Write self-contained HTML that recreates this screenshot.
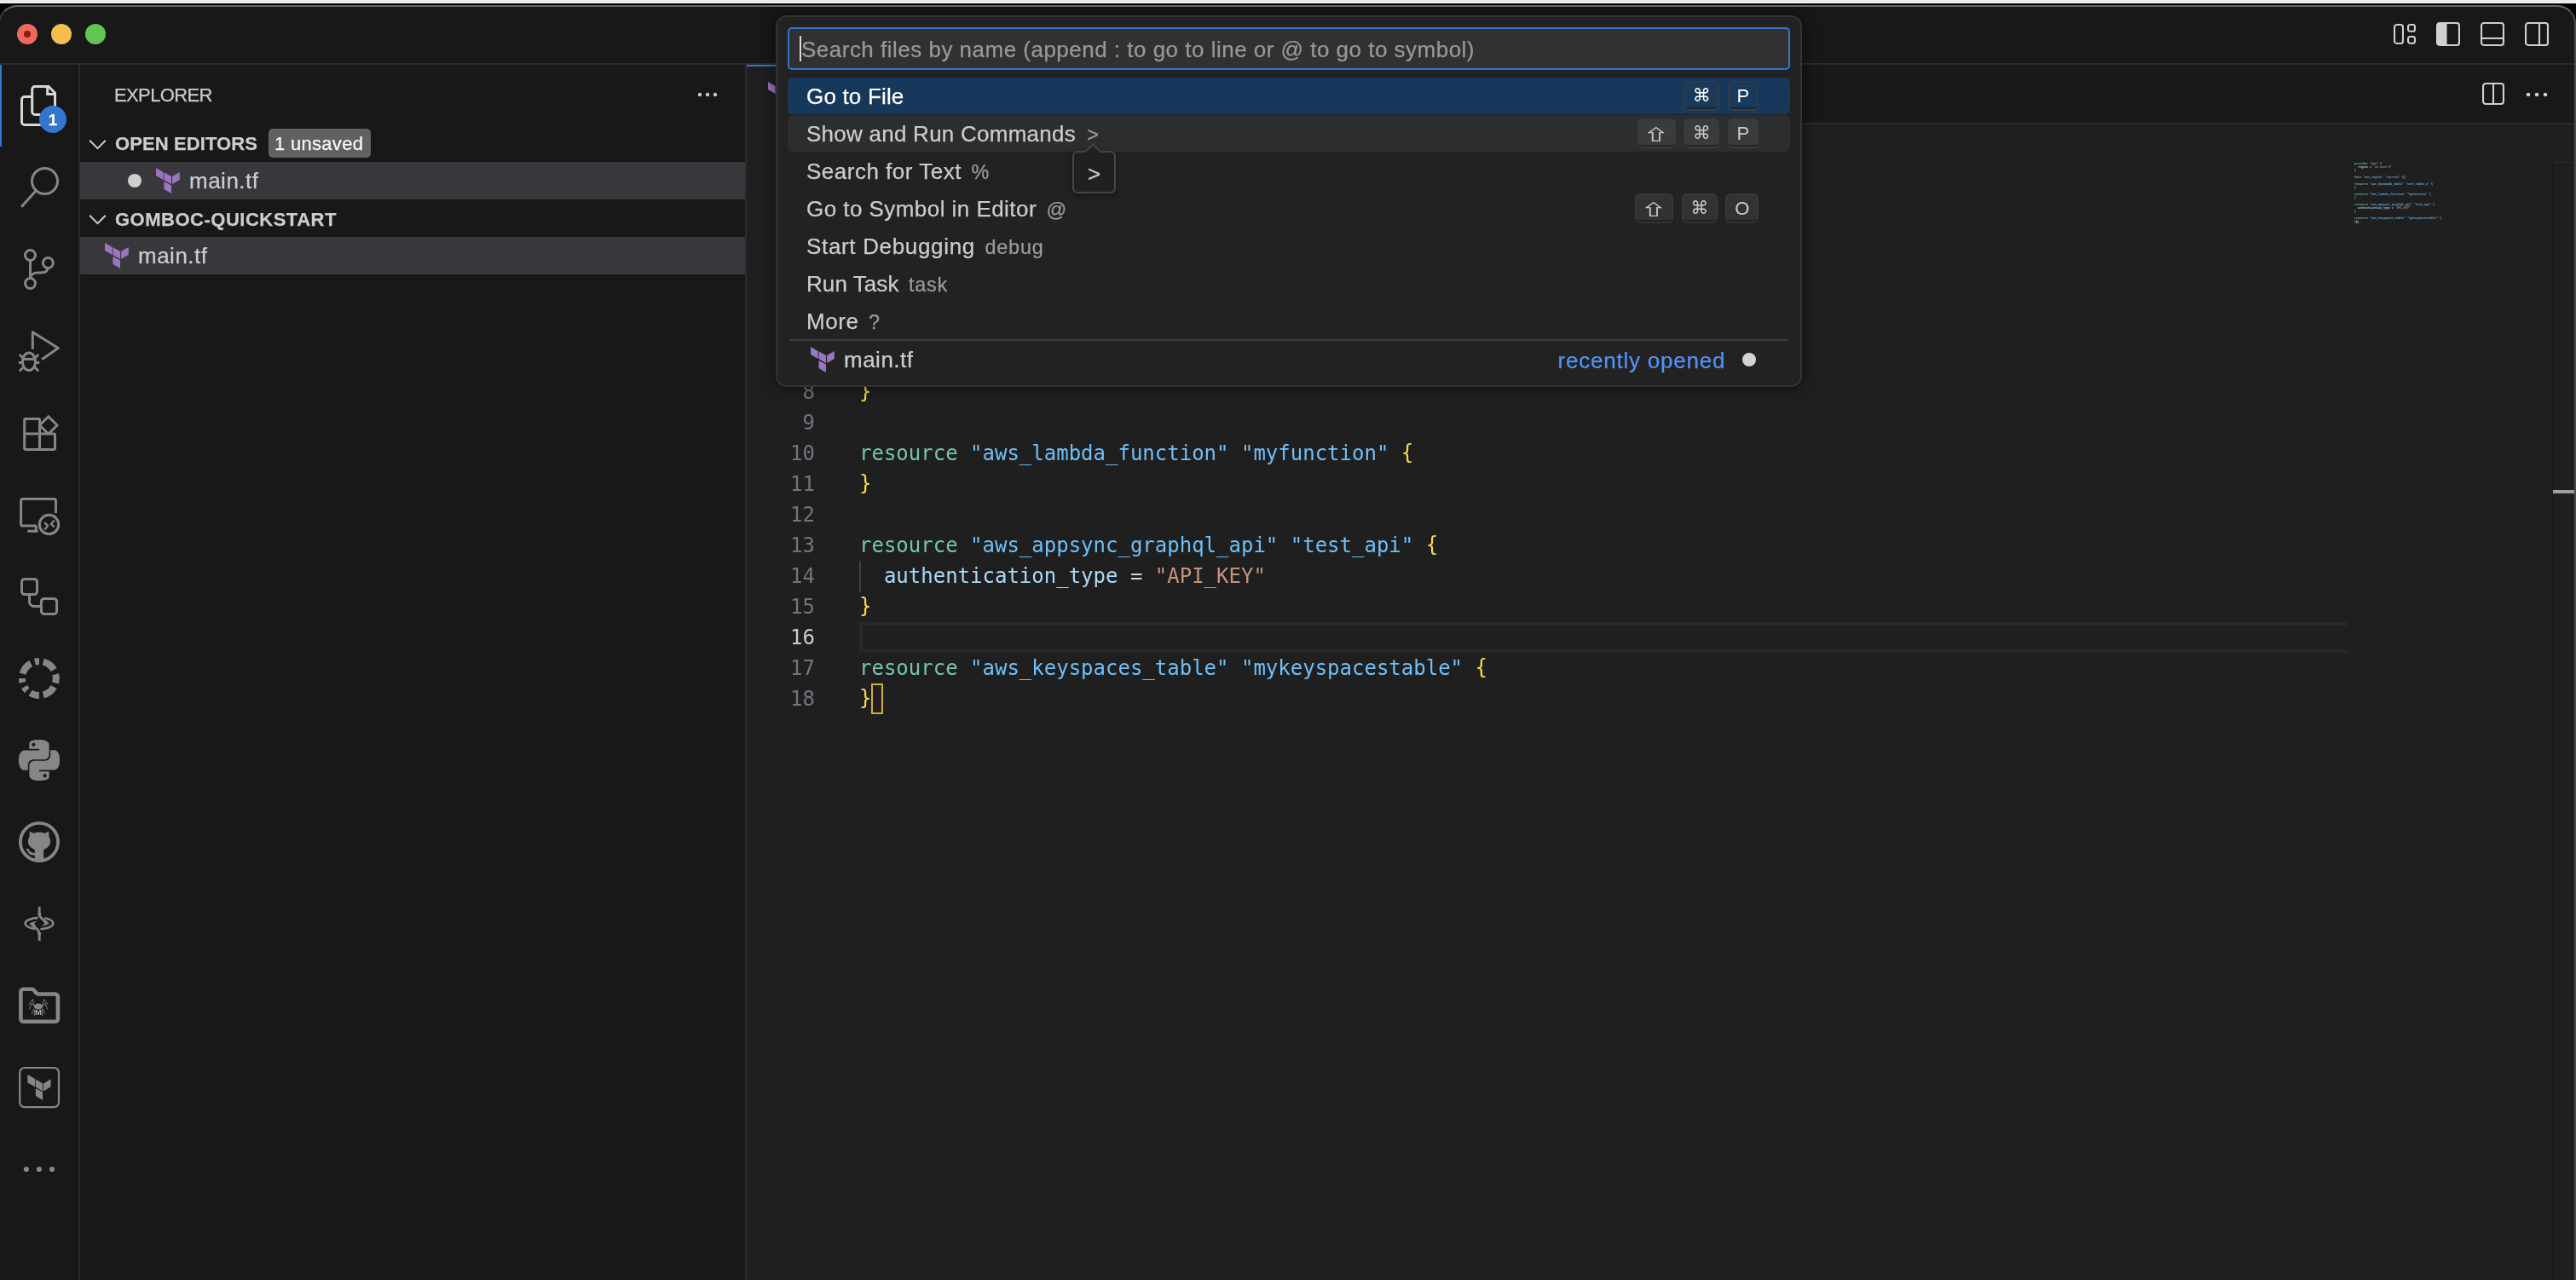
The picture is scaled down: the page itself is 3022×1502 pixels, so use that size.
<!DOCTYPE html>
<html lang="en"><head><meta charset="utf-8"><title>main.tf — gomboc-quickstart</title>
<style>
*{box-sizing:border-box;margin:0;padding:0}
html,body{width:3022px;height:1502px;overflow:hidden;background:#000}
body{position:relative;font-family:"Liberation Sans","DejaVu Sans",sans-serif;color:#cccccc;-webkit-font-smoothing:antialiased}
.abs{position:absolute}
.t{position:absolute;white-space:pre;line-height:1;-webkit-text-stroke:0.25px currentColor}
#strip{left:0;top:0;width:3022px;height:4px;background:#eceae4;border-bottom:1px solid #fdfbf6}
#win{left:-2px;top:6px;width:3024px;height:1600px;background:#181818;border-radius:22px 22px 0 0;overflow:hidden}
#winhl{left:-2px;top:6px;width:3024px;height:1600px;border-radius:22px 22px 0 0;border:2px solid #676767;border-bottom:none;border-left-color:#3a3a3a;border-right-color:#4a4a4a;pointer-events:none}
.mono{font-family:"DejaVu Sans Mono","Liberation Mono",monospace}
.code{position:absolute;left:1008px;font-size:24px;line-height:36px;height:36px;white-space:pre;font-family:"DejaVu Sans Mono","Liberation Mono",monospace}
.ln{position:absolute;left:876px;width:80px;text-align:right;font-size:24px;line-height:36px;height:36px;color:#6f7680;font-family:"DejaVu Sans Mono","Liberation Mono",monospace}
.mb{color:#c4c4c4}.k{color:#71c6b1}.l{color:#6fbff9}.b{color:#f9d849;position:relative;top:-1.3px}.v{color:#aadafa}.s{color:#c5947c}.o{color:#d4d4d4}
.row{position:absolute;left:924px;width:1176px;height:44px;border-radius:6px}
.rt{position:absolute;left:23px;top:0;height:44px;line-height:44px;font-size:26px;white-space:pre;color:#cccccc}
.rd{font-size:23.4px;color:#9a9a9a}
.key{position:absolute;height:33px;border-radius:6px;background:rgba(128,128,128,.17);border:2px solid rgba(60,60,60,.75);border-bottom-color:rgba(30,30,30,.8);box-shadow:0 2px 0 rgba(70,70,70,.5);font-size:22px;line-height:31px;text-align:center;color:#cccccc;font-family:"Liberation Sans","DejaVu Sans",sans-serif}
</style></head>
<body>
<div class="abs" id="strip"></div>
<div class="abs" id="win">
<div class="abs" id="w" style="left:2px;top:-6px;width:3022px;height:1600px;will-change:transform">
<div class="abs" style="left:-2px;top:74px;width:3026px;height:2px;background:#2b2b2b"></div>
<div class="abs" style="left:20px;top:28px;width:24px;height:24px;border-radius:50%;background:#ed6a5e"></div>
<div class="abs" style="left:60px;top:28px;width:24px;height:24px;border-radius:50%;background:#f4bf4f"></div>
<div class="abs" style="left:100px;top:28px;width:24px;height:24px;border-radius:50%;background:#61c554"></div>
<div class="abs" style="left:28px;top:36px;width:8px;height:8px;border-radius:50%;background:#8e1a10"></div>
<div class="abs" style="left:92px;top:76px;width:2px;height:1500px;background:#2b2b2b"></div>
<div class="abs" style="left:874px;top:76px;width:2px;height:1500px;background:#2b2b2b"></div>
<div class="abs" style="left:-2px;top:76px;width:4px;height:96px;background:#3376cd"></div>
<div class="abs" style="left:876px;top:146px;width:2146px;height:1500px;background:#1f1f1f"></div>
<div class="abs" style="left:876px;top:144px;width:2146px;height:2px;background:#2b2b2b"></div>
<div class="abs" style="left:876px;top:76px;width:260px;height:70px;background:#1f1f1f;border-top:2px solid #3376cd;border-right:2px solid #2b2b2b"></div>
<svg class="abs" style="left:901px;top:95.5px;" width="28.0" height="30.0" viewBox="0 0 28 30"><polygon fill="#9976bf" points="0,0 8.6,4.9 8.6,13.9 0,9"/><polygon fill="#9976bf" points="9.5,5.2 18,10.1 18,19.1 9.5,14.2"/><polygon fill="#9976bf" points="19.1,10.1 27.8,5.1 27.8,13.9 19.1,19.1"/><polygon fill="#9976bf" points="9.5,16.1 18,20.6 18,30 9.5,25.1"/></svg>
<div class="t" style="left:941px;top:98px;font-size:26px;color:#fff">main.tf</div>
<svg class="abs" style="left:0;top:76px" width="96" height="96" viewBox="0 0 96 96" fill="none" stroke="#d7d7d7" stroke-width="3"><path d="M41 25.5H57L64.5 33V58.5H41a3.3 3.3 0 0 1-3.3-3.3V28.8A3.3 3.3 0 0 1 41 25.5z"/><path d="M55.7 25.5V34.5H64.5"/><path d="M37.7 37.5H29a3.5 3.5 0 0 0-3.5 3.5V67a3.5 3.5 0 0 0 3.5 3.5H52V58.5"/></svg>
<div class="abs" style="left:46px;top:124px;width:32px;height:32px;border-radius:50%;background:#3376cd"></div>
<div class="t" style="left:46px;top:131px;width:32px;text-align:center;font-size:19px;font-weight:bold;color:#fff">1</div>
<svg class="abs" style="left:0;top:172px" width="96" height="96" viewBox="0 0 96 96" fill="none" stroke="#868686" stroke-width="3"><circle cx="52.5" cy="40.5" r="15"/><path d="M42.2 51.8L25.2 70.8"/></svg>
<svg class="abs" style="left:0;top:268px" width="96" height="96" viewBox="0 0 96 96" fill="none" stroke="#868686" stroke-width="3"><circle cx="35.5" cy="31.5" r="6"/><circle cx="56.4" cy="40.5" r="6"/><circle cx="35.5" cy="64.5" r="6"/><path d="M35.5 37.5V58.5"/><path d="M56 46.5C55 53 49 52 44.5 52C39.5 52 36 54.5 35.6 58.5"/></svg>
<svg class="abs" style="left:0;top:364px" width="96" height="96" viewBox="0 0 96 96" fill="none" stroke="#868686" stroke-width="3"><path d="M38.3 45.8V25.800L68.300 44.500L49.1 57.8" stroke-linejoin="round"/><ellipse cx="34" cy="60.3" rx="7.6" ry="10.3"/><path d="M26.6 57.4H41.4"/><path d="M28.6 54.5A5.6 5.6 0 0 1 39.4 54.5" stroke-width="2.2"/><path d="M22.8 52L27 56M45.2 52L41 56M21.8 61.5H26.4M41.6 61.5H46.2M22.8 71.5L27.6 66.7M45.2 71.5L40.4 66.7"/></svg>
<svg class="abs" style="left:0;top:460px" width="96" height="96" viewBox="0 0 96 96" fill="none" stroke="#868686" stroke-width="3"><path d="M30 31.5H45.2a1.3 1.3 0 0 1 1.3 1.3V67.4H30a1.3 1.3 0 0 1-1.3-1.3V32.8A1.3 1.3 0 0 1 30 31.5z"/><path d="M28.7 49.1H63.2a1.3 1.3 0 0 1 1.3 1.3V66.1a1.3 1.3 0 0 1-1.3 1.3H46.5"/><path d="M56.8 28.7L67.1 39L56.8 49.3L46.5 39z" stroke-linejoin="round"/></svg>
<svg class="abs" style="left:0;top:556px" width="96" height="96" viewBox="0 0 96 96" fill="none" stroke="#868686" stroke-width="3"><path d="M65.5 46V32a2.4 2.4 0 0 0-2.4-2.4H27a2.4 2.4 0 0 0-2.4 2.4V58.7a2.4 2.4 0 0 0 2.4 2.4H42.6"/><path d="M42.3 61V67.3M32.4 67.3H44.6"/><circle cx="57.5" cy="59.5" r="11.2"/><path d="M52.3 57.2L56 61L52.3 65.5M63.8 54.6L60 58.8L63.8 62.3" stroke-width="2.4"/></svg>
<svg class="abs" style="left:0;top:652px" width="96" height="96" viewBox="0 0 96 96" fill="none" stroke="#868686" stroke-width="3"><rect x="25.5" y="27.4" width="18" height="18.2" rx="3.5"/><rect x="48.4" y="50.4" width="18.2" height="18.2" rx="3.5"/><path d="M34.5 46V54a5.5 5.5 0 0 0 5.5 5.5H48"/></svg>
<svg class="abs" style="left:0;top:748px" width="96" height="96" viewBox="0 0 96 96" fill="none" stroke="#868686" stroke-width="8"><path d="M40.89 28.64A20 20 0 0 1 45.90 28.00M50.74 28.59A20 20 0 0 1 63.22 38.00M65.31 43.16A20 20 0 0 1 65.13 53.51M63.22 58.00A20 20 0 0 1 50.74 67.41M45.90 68.00A20 20 0 0 1 35.60 65.14M31.76 62.14A20 20 0 0 1 28.58 58.00M26.49 52.84A20 20 0 0 1 25.90 48.00M26.63 42.66A20 20 0 0 1 36.20 30.51"/></svg>
<svg class="abs" style="left:0;top:844px" width="96" height="96" viewBox="0 0 96 96"><g transform="translate(22 24) scale(2.0)"><path fill="#868686" fill-rule="evenodd" d="M14.25.18l.9.2.73.26.59.3.45.32.34.34.25.34.16.33.1.3.04.26.02.2-.01.13V8.5l-.05.63-.13.55-.21.46-.26.38-.3.31-.33.25-.35.19-.35.14-.33.1-.3.07-.26.04-.21.02H8.77l-.69.05-.59.14-.5.22-.41.27-.33.32-.27.35-.2.36-.15.37-.1.35-.07.32-.04.27-.02.21v3.06H3.17l-.21-.03-.28-.07-.32-.12-.35-.18-.36-.26-.36-.36-.35-.46-.32-.59-.28-.73-.21-.88-.14-1.05-.05-1.23.06-1.22.16-1.04.24-.87.32-.71.36-.57.4-.44.42-.33.42-.24.4-.16.36-.1.32-.05.24-.01h.16l.06.01h8.16v-.83H6.18l-.01-2.75-.02-.37.05-.34.11-.31.17-.28.25-.26.31-.23.38-.2.44-.18.51-.15.58-.12.64-.1.71-.06.77-.04.84-.02 1.27.05zm-6.3 1.98l-.23.33-.08.41.08.41.23.34.33.22.41.09.41-.09.33-.22.23-.34.08-.41-.08-.41-.23-.33-.33-.22-.41-.09-.41.09zm13.09 3.95l.28.06.32.12.35.18.36.27.36.35.35.47.32.59.28.73.21.88.14 1.04.05 1.23-.06 1.23-.16 1.04-.24.86-.32.71-.36.57-.4.45-.42.33-.42.24-.4.16-.36.09-.32.05-.24.02-.16-.01h-8.22v.82h5.84l.01 2.76.02.36-.05.34-.11.31-.17.29-.25.25-.31.24-.38.2-.44.17-.51.15-.58.13-.64.09-.71.07-.77.04-.84.01-1.27-.04-1.07-.14-.9-.2-.73-.25-.59-.3-.45-.33-.34-.34-.25-.34-.16-.33-.1-.3-.04-.25-.02-.2.01-.13v-5.34l.05-.64.13-.54.21-.46.26-.38.3-.32.33-.24.35-.2.35-.14.33-.1.3-.06.26-.04.21-.02.13-.01h5.84l.69-.05.59-.14.5-.21.41-.28.33-.32.27-.35.2-.36.15-.36.1-.35.07-.32.04-.28.02-.21V6.07h2.09l.14.01zm-6.47 14.25l-.23.33-.08.41.08.41.23.33.33.23.41.08.41-.08.33-.23.23-.33.08-.41-.08-.41-.23-.33-.33-.23-.41-.08-.41.08z"/></g></svg>
<svg class="abs" style="left:0;top:940px" width="96" height="96" viewBox="0 0 96 96" fill="none" stroke="#868686" stroke-width="3"><circle cx="46" cy="48" r="22.1" stroke-width="3.8"/><g fill="#868686" stroke="none"><ellipse cx="46" cy="47.2" rx="13.1" ry="10.6"/><path d="M34.6 44V36.2q0-.9.8-.5L42.5 39.2zM57.4 44V36.2q0-.9-.8-.5L49.5 39.2z"/><path d="M40.8 55H51.2V68.2q-5.2 1.2-10.4 0z"/><path d="M30.8 56.2c1.2-.8 2.6-.3 3.6 1.2 1.6 2.6 3 3.6 6.6 3.4v2.6c-4.4.6-6.8-.8-8.4-4.2-.5-1-1-1.8-1.8-2.2z"/></g></svg>
<svg class="abs" style="left:0;top:1036px" width="96" height="96" viewBox="0 0 96 96" fill="none" stroke="#868686" stroke-width="3"><path d="M44.6 40.9C36 41.5 29.6 44.3 29.6 47.6c0 3 5 5.500 11.6 6.500M47.400 54.300C56 53.7 62.400 51 62.400 47.600c0-2.900-4.200-5.300-10.200-6.400" stroke-width="2.600"/><path d="M46.200 28V36.500c0 5.500 5.300 6.300 9.800 11.100M46.200 68V59.500c0-5.500-5.300-6.300-10.200-11.900" stroke-width="2.800"/><path fill="#868686" stroke="none" d="M34.2 47.600L43 44.400L40.200 47.800L42.400 51.500zM58 47.800L49.200 51.600L52.200 47.600L49.800 44z"/><path fill="#868686" stroke="none" d="M43.800 37.800L46.200 31L48.400 37.800zM43.800 58.200L46.200 65L48.400 58.200z"/></svg>
<svg class="abs" style="left:0;top:1132px" width="96" height="96" viewBox="0 0 96 96" fill="none" stroke="#868686" stroke-width="3"><path d="M24.400 63.800V31.800a3 3 0 0 1 3-3H37.500a3 3 0 0 1 2.300 1.100L42.600 33.400a3 3 0 0 0 2.300 1.100H64.900a3 3 0 0 1 3 3V63.800a3 3 0 0 1-3 3H27.400a3 3 0 0 1-3-3z" stroke-width="4.600"/><ellipse cx="45" cy="49" rx="5.200" ry="3.400" fill="#868686" stroke="none"/><path d="M40 48L38.400 40.500L33.500 47M41 50L37 45L34.500 52.500M39.800 51.500L37.300 58M40.600 52.500L40.300 60M50 48L51.600 40.500L56.500 47M49 50L53 45L55.500 52.500M50.200 51.500L52.700 58M49.400 52.500L49.700 60" stroke-width="0.9"/></svg>
<div class="t" style="left:30px;top:1183px;width:30px;text-align:center;font-size:9.500px;font-weight:bold;color:#b4b4b4;-webkit-text-stroke:0">M</div>
<svg class="abs" style="left:0;top:1228px" width="96" height="96" viewBox="0 0 96 96" fill="none" stroke="#868686" stroke-width="3"><rect x="23.200" y="25" width="45.800" height="46.100" rx="5.500" stroke-width="2.200"/><g fill="#868686" stroke="none"><polygon points="32.400,33 41.100,38 41.100,47.300 32.400,42.400"/><polygon points="41.900,38.600 50.100,43.500 50.100,52.500 41.900,47.600"/><polygon points="51,43.500 59.500,38.300 59.500,47.300 51,52.500"/><polygon points="41.900,49.100 50.100,53.600 50.100,63 41.900,58.100"/></g></svg>
<svg class="abs" style="left:0;top:1324px" width="96" height="96" viewBox="0 0 96 96" fill="none" stroke="#868686" stroke-width="3"><g fill="#868686" stroke="none"><circle cx="30.900" cy="48" r="3.100"/><circle cx="45.900" cy="48" r="3.100"/><circle cx="61" cy="48" r="3.100"/></g></svg>
<div class="t" style="left:134px;top:101.38px;font-size:22px;color:#cccccc;font-weight:normal;letter-spacing:-0.62px;">EXPLORER</div>
<svg class="abs" style="left:810px;top:100px" width="40" height="22"><g fill="#cccccc"><circle cx="11" cy="11" r="2.200"/><circle cx="20" cy="11" r="2.200"/><circle cx="29" cy="11" r="2.200"/></g></svg>
<svg class="abs" style="left:102.5px;top:161.5px" width="24" height="16" viewBox="0 0 24 16" fill="none" stroke="#cccccc" stroke-width="2"><path d="M2.200 2.800L11.500 12.200L20.800 2.800"/></svg>
<div class="t" style="left:135px;top:158.38px;font-size:22px;color:#cccccc;font-weight:bold;letter-spacing:0.1px;">OPEN EDITORS</div>
<div class="abs" style="left:315px;top:151px;width:120px;height:34px;border-radius:5px;background:#616161"></div>
<div class="t" style="left:322px;top:158.38px;font-size:22px;color:#f8f8f8;font-weight:normal;letter-spacing:0.3px;">1 unsaved</div>
<div class="abs" style="left:94px;top:190px;width:780px;height:44px;background:#37373c"></div>
<div class="abs" style="left:150px;top:204px;width:16px;height:16px;border-radius:50%;background:#cfcfcf"></div>
<svg class="abs" style="left:183px;top:197px;" width="28.0" height="30.0" viewBox="0 0 28 30"><polygon fill="#9976bf" points="0,0 8.6,4.9 8.6,13.9 0,9"/><polygon fill="#9976bf" points="9.5,5.2 18,10.1 18,19.1 9.5,14.2"/><polygon fill="#9976bf" points="19.1,10.1 27.8,5.1 27.8,13.9 19.1,19.1"/><polygon fill="#9976bf" points="9.5,16.1 18,20.6 18,30 9.5,25.1"/></svg>
<div class="t" style="left:222px;top:198.99px;font-size:26px;color:#cccccc;font-weight:normal;letter-spacing:0.5px;">main.tf</div>
<svg class="abs" style="left:102.5px;top:250px" width="24" height="16" viewBox="0 0 24 16" fill="none" stroke="#cccccc" stroke-width="2"><path d="M2.200 2.800L11.500 12.200L20.800 2.800"/></svg>
<div class="t" style="left:135px;top:247.38px;font-size:22px;color:#cccccc;font-weight:bold;letter-spacing:0.5px;">GOMBOC-QUICKSTART</div>
<div class="abs" style="left:94px;top:278px;width:780px;height:44px;background:#37373c"></div>
<svg class="abs" style="left:123px;top:285px;" width="28.0" height="30.0" viewBox="0 0 28 30"><polygon fill="#9976bf" points="0,0 8.6,4.9 8.6,13.9 0,9"/><polygon fill="#9976bf" points="9.5,5.2 18,10.1 18,19.1 9.5,14.2"/><polygon fill="#9976bf" points="19.1,10.1 27.8,5.1 27.8,13.9 19.1,19.1"/><polygon fill="#9976bf" points="9.5,16.1 18,20.6 18,30 9.5,25.1"/></svg>
<div class="t" style="left:162px;top:286.99px;font-size:26px;color:#cccccc;font-weight:normal;letter-spacing:0.5px;">main.tf</div>
<svg class="abs" style="left:2806px;top:26px" width="16" height="28" viewBox="-2 -2 16 28" fill="none" stroke="#d0d0d0" stroke-width="2.1"><rect x="1.05" y="1.05" width="9.9" height="21.9" rx="2.8"/></svg>
<svg class="abs" style="left:2822px;top:26px" width="14" height="13.8" viewBox="-2 -2 14 13.8" fill="none" stroke="#d0d0d0" stroke-width="2.1"><rect x="1.05" y="1.05" width="7.9" height="7.700000000000001" rx="2.3"/></svg>
<svg class="abs" style="left:2822px;top:39.8px" width="14" height="13.8" viewBox="-2 -2 14 13.8" fill="none" stroke="#d0d0d0" stroke-width="2.1"><rect x="1.05" y="1.05" width="7.9" height="7.700000000000001" rx="2.3"/></svg>
<svg class="abs" style="left:2856px;top:24px" width="32" height="32" viewBox="-2 -2 32 32" fill="none" stroke="#d0d0d0" stroke-width="2.1"><rect x="1.05" y="1.05" width="25.9" height="25.9" rx="2.8"/><path d="M1.100 4A2.900 2.900 0 0 1 4 1.100H11.500V26.900H4A2.900 2.900 0 0 1 1.100 24z" fill="#d0d0d0" stroke="none"/><path d="M11.500 1V27"/></svg>
<svg class="abs" style="left:2908px;top:24px" width="32" height="32" viewBox="-2 -2 32 32" fill="none" stroke="#d0d0d0" stroke-width="2.1"><rect x="1.05" y="1.05" width="25.9" height="25.9" rx="2.8"/><path d="M1 19H27"/></svg>
<svg class="abs" style="left:2960px;top:24px" width="32" height="32" viewBox="-2 -2 32 32" fill="none" stroke="#d0d0d0" stroke-width="2.1"><rect x="1.05" y="1.05" width="25.9" height="25.9" rx="2.8"/><path d="M17 1V27"/></svg>
<svg class="abs" style="left:2910px;top:95px" width="30" height="30" viewBox="-2 -2 30 30" fill="none" stroke="#d0d0d0" stroke-width="2.1"><rect x="1.05" y="1.05" width="23.9" height="23.9" rx="3"/><path d="M13 1V25"/></svg>
<svg class="abs" style="left:2956px;top:100px" width="40" height="22"><g fill="#d0d0d0"><circle cx="10" cy="11" r="2.300"/><circle cx="20" cy="11" r="2.300"/><circle cx="30" cy="11" r="2.300"/></g></svg>
<div class="abs" style="left:1008px;top:730px;width:1746px;height:36px;border:4px solid #282828;border-right:none"></div>
<div class="abs" style="left:1008px;top:658px;width:2px;height:36px;background:#404040"></div>
<div class="abs" style="left:1008px;top:226px;width:2px;height:36px;background:#404040"></div>
<div class="ln" style="top:190px;">1</div>
<div class="code" style="top:190px"><span class="k">provider</span> <span class="l">"aws"</span> <span class="b">{</span></div>
<div class="ln" style="top:226px;">2</div>
<div class="code" style="top:226px">  <span class="v">region</span> <span class="o">=</span> <span class="s">"us-east-2"</span></div>
<div class="ln" style="top:262px;">3</div>
<div class="code" style="top:262px"><span class="b">}</span></div>
<div class="ln" style="top:298px;">4</div>
<div class="ln" style="top:334px;">5</div>
<div class="code" style="top:334px"><span class="k">data</span> <span class="l">"aws_region"</span> <span class="l">"current"</span> <span class="b">{}</span></div>
<div class="ln" style="top:370px;">6</div>
<div class="ln" style="top:406px;">7</div>
<div class="code" style="top:406px"><span class="k">resource</span> <span class="l">"aws_dynamodb_table"</span> <span class="l">"test_table_a"</span> <span class="b">{</span></div>
<div class="ln" style="top:442px;">8</div>
<div class="code" style="top:442px"><span class="b">}</span></div>
<div class="ln" style="top:478px;">9</div>
<div class="ln" style="top:514px;">10</div>
<div class="code" style="top:514px"><span class="k">resource</span> <span class="l">"aws_lambda_function"</span> <span class="l">"myfunction"</span> <span class="b">{</span></div>
<div class="ln" style="top:550px;">11</div>
<div class="code" style="top:550px"><span class="b">}</span></div>
<div class="ln" style="top:586px;">12</div>
<div class="ln" style="top:622px;">13</div>
<div class="code" style="top:622px"><span class="k">resource</span> <span class="l">"aws_appsync_graphql_api"</span> <span class="l">"test_api"</span> <span class="b">{</span></div>
<div class="ln" style="top:658px;">14</div>
<div class="code" style="top:658px">  <span class="v">authentication_type</span> <span class="o">=</span> <span class="s">"API_KEY"</span></div>
<div class="ln" style="top:694px;">15</div>
<div class="code" style="top:694px"><span class="b">}</span></div>
<div class="ln" style="top:730px;color:#cccccc">16</div>
<div class="ln" style="top:766px;">17</div>
<div class="code" style="top:766px"><span class="k">resource</span> <span class="l">"aws_keyspaces_table"</span> <span class="l">"mykeyspacestable"</span> <span class="b">{</span></div>
<div class="ln" style="top:802px;">18</div>
<div class="code" style="top:802px"><span class="b">}</span></div>
<div class="abs" style="left:1022px;top:802px;width:14.200px;height:36px;border:2px solid #d1ae35"></div>
<div class="abs mono" style="left:2762px;top:189.500px;width:1600px;font-size:24px;line-height:36px;white-space:pre;transform-origin:0 0;transform:scale(0.1384,0.1111);opacity:.8;font-weight:bold"><div style="height:36px"><span class="k">provider</span> <span class="l">"aws"</span> <span class="mb">{</span></div><div style="height:36px">  <span class="v">region</span> <span class="o">=</span> <span class="s">"us-east-2"</span></div><div style="height:36px"><span class="mb">}</span></div><div style="height:36px"> </div><div style="height:36px"><span class="k">data</span> <span class="l">"aws_region"</span> <span class="l">"current"</span> <span class="mb">{}</span></div><div style="height:36px"> </div><div style="height:36px"><span class="k">resource</span> <span class="l">"aws_dynamodb_table"</span> <span class="l">"test_table_a"</span> <span class="mb">{</span></div><div style="height:36px"><span class="mb">}</span></div><div style="height:36px"> </div><div style="height:36px"><span class="k">resource</span> <span class="l">"aws_lambda_function"</span> <span class="l">"myfunction"</span> <span class="mb">{</span></div><div style="height:36px"><span class="mb">}</span></div><div style="height:36px"> </div><div style="height:36px"><span class="k">resource</span> <span class="l">"aws_appsync_graphql_api"</span> <span class="l">"test_api"</span> <span class="mb">{</span></div><div style="height:36px">  <span class="v">authentication_type</span> <span class="o">=</span> <span class="s">"API_KEY"</span></div><div style="height:36px"><span class="mb">}</span></div><div style="height:36px"> </div><div style="height:36px"><span class="k">resource</span> <span class="l">"aws_keyspaces_table"</span> <span class="l">"mykeyspacestable"</span> <span class="mb">{</span></div><div style="height:36px"><span class="mb">}</span></div></div>
<div class="abs" style="left:2764px;top:258.500px;width:2.500px;height:3px;border:1px solid #9a9a9a;opacity:.8"></div>
<div class="abs" style="left:2994px;top:190px;width:30px;height:1500px;border-left:1px solid #191919;border-top:1px solid #2b2b2b"></div>
<div class="abs" style="left:2995px;top:575px;width:27px;height:3.500px;background:#a0a0a0"></div>
<div class="abs" style="left:910px;top:18px;width:1204px;height:436px;background:#222222;border:2px solid #343434;border-radius:13px;box-shadow:0 0 16px 3px rgba(0,0,0,.4)"></div>
<div class="abs" style="left:924px;top:32px;width:1176px;height:50px;background:#313131;border:2px solid #3376cd;border-radius:5px"></div>
<div class="abs" style="left:937.500px;top:42px;width:2px;height:30px;background:#d8d8d8"></div>
<div class="t" style="left:940px;top:45.49px;font-size:26px;color:#989898;font-weight:normal;letter-spacing:0.49px;">Search files by name (append : to go to line or @ to go to symbol)</div>
<div class="abs" style="left:924px;top:90.5px;width:1176px;height:43.500px;border-radius:6px;background:#16385b"></div>
<div class="t" id="r0" style="left:946px;top:90px;height:44px;line-height:46px;font-size:26px;color:#ffffff"><span class="rl" style="letter-spacing:0.18px">Go to File</span><span class="rd" style="margin-left:11.5px;letter-spacing:0.8px"></span></div>
<div class="key" style="left:2026.7px;top:94.5px;width:36.5px;background:rgba(128,128,128,.04);color:#ffffff">P</div>
<div class="key" style="left:1975.2px;top:94.5px;width:42px;font-family:'DejaVu Sans',sans-serif;font-size:21px;background:rgba(128,128,128,.04);color:#ffffff">⌘</div>
<div class="abs" style="left:924px;top:134.5px;width:1176px;height:43.500px;border-radius:6px;background:#2b2d2e"></div>
<div class="t" id="r1" style="left:946px;top:134px;height:44px;line-height:46px;font-size:26px;color:#cccccc"><span class="rl" style="letter-spacing:0.25px">Show and Run Commands</span><span class="rd" style="margin-left:13.3px;letter-spacing:0.8px">&gt;</span></div>
<div class="key" style="left:2026.7px;top:138.5px;width:36.5px;color:#cccccc">P</div>
<div class="key" style="left:1975.2px;top:138.5px;width:42px;font-family:'DejaVu Sans',sans-serif;font-size:21px;color:#cccccc">⌘</div>
<div class="key" style="left:1920.7px;top:138.5px;width:45px;font-family:'DejaVu Sans',sans-serif;font-size:21px;color:#cccccc"><span style="display:inline-block;font-family:'Noto Sans CJK SC','DejaVu Sans',sans-serif;font-size:23px;line-height:31px;height:31px;transform:translate(-0.8px,0.2px) scale(1.2,0.76);-webkit-text-stroke:0.6px currentColor">⇧</span></div>
<div class="t" id="r2" style="left:946px;top:178px;height:44px;line-height:46px;font-size:26px;color:#cccccc"><span class="rl" style="letter-spacing:0.5px">Search for Text</span><span class="rd" style="margin-left:11.5px;letter-spacing:0.8px">%</span></div>
<div class="t" id="r3" style="left:946px;top:222px;height:44px;line-height:46px;font-size:26px;color:#cccccc"><span class="rl" style="letter-spacing:0.45px">Go to Symbol in Editor</span><span class="rd" style="margin-left:11.5px;letter-spacing:0.8px">@</span></div>
<div class="key" style="left:2024.2px;top:226.5px;width:39px;color:#cccccc">O</div>
<div class="key" style="left:1972.7px;top:226.5px;width:42px;font-family:'DejaVu Sans',sans-serif;font-size:21px;color:#cccccc">⌘</div>
<div class="key" style="left:1918.2px;top:226.5px;width:45px;font-family:'DejaVu Sans',sans-serif;font-size:21px;color:#cccccc"><span style="display:inline-block;font-family:'Noto Sans CJK SC','DejaVu Sans',sans-serif;font-size:23px;line-height:31px;height:31px;transform:translate(-0.8px,0.2px) scale(1.2,0.76);-webkit-text-stroke:0.6px currentColor">⇧</span></div>
<div class="t" id="r4" style="left:946px;top:266px;height:44px;line-height:46px;font-size:26px;color:#cccccc"><span class="rl" style="letter-spacing:0.67px">Start Debugging</span><span class="rd" style="margin-left:11.5px;letter-spacing:0.8px">debug</span></div>
<div class="t" id="r5" style="left:946px;top:310px;height:44px;line-height:46px;font-size:26px;color:#cccccc"><span class="rl" style="letter-spacing:0.07px">Run Task</span><span class="rd" style="margin-left:11.5px;letter-spacing:0.8px">task</span></div>
<div class="t" id="r6" style="left:946px;top:354px;height:44px;line-height:46px;font-size:26px;color:#cccccc"><span class="rl" style="letter-spacing:0.56px">More</span><span class="rd" style="margin-left:11.5px;letter-spacing:0.8px">?</span></div>
<div class="abs" style="left:926px;top:398px;width:1172px;height:2px;background:#3c3c3c"></div>
<svg class="abs" style="left:951px;top:407px;" width="28.0" height="30.0" viewBox="0 0 28 30"><polygon fill="#9976bf" points="0,0 8.6,4.9 8.6,13.9 0,9"/><polygon fill="#9976bf" points="9.5,5.2 18,10.1 18,19.1 9.5,14.2"/><polygon fill="#9976bf" points="19.1,10.1 27.8,5.1 27.8,13.9 19.1,19.1"/><polygon fill="#9976bf" points="9.5,16.1 18,20.6 18,30 9.5,25.1"/></svg>
<div class="t" style="left:990px;top:408.99px;font-size:26px;color:#cccccc;font-weight:normal;letter-spacing:0.5px;">main.tf</div>
<div class="t" style="left:1827.5px;top:409.99px;font-size:26px;color:#5292f7;font-weight:normal;letter-spacing:0.78px;">recently opened</div>
<div class="abs" style="left:2043.700px;top:413.800px;width:16.200px;height:16.200px;border-radius:50%;background:#d4d4d4"></div>
<div class="abs" style="left:1258px;top:177px;width:51px;height:50px;background:#202020;border:2px solid #454545;border-radius:6px;box-shadow:0 2px 8px rgba(0,0,0,.4)"></div>
<svg class="abs" style="left:1270px;top:168px" width="24" height="12" viewBox="0 0 24 12"><path d="M2.500 10.400L12 1.600L21.500 10.400" fill="#202020" stroke="#454545" stroke-width="2"/><path d="M3.800 11H20.200" stroke="#202020" stroke-width="2.200"/></svg>
<div class="t" style="left:1276px;top:191.49px;font-size:26px;color:#cccccc;font-weight:normal;letter-spacing:0px;">&gt;</div>
</div></div>
<div class="abs" id="winhl"></div>
</body></html>
